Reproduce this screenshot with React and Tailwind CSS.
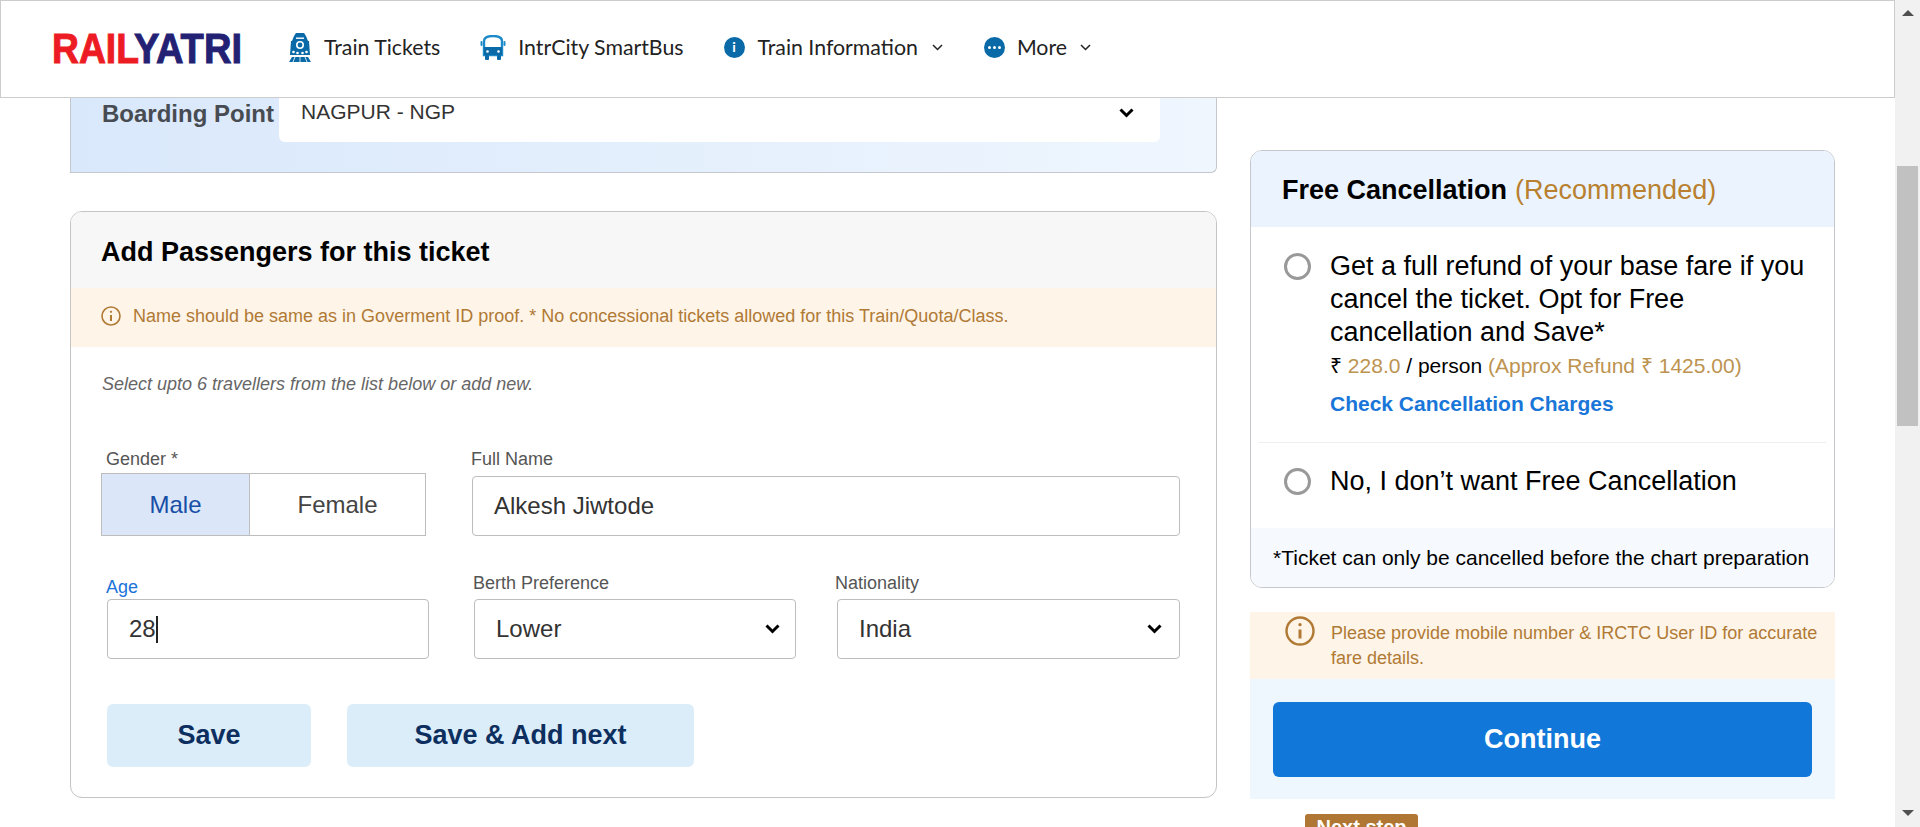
import React from 'react';

const sans = "font-['Liberation_Sans',Arial,sans-serif]";
const Fieldbox = 'rounded-[4px] border border-[#bdbdbd] bg-white h-[60px] flex items-center';

const TrainIcon = () => (
  <svg width="22" height="29" viewBox="0 0 22 29" fill="#0a6aa8">
    <path d="M7 0h8l2 3H5z" />
    <path d="M5 3h12l2 5H3z" />
    <path d="M2 8h18l1 14H1z" />
    <circle cx="11" cy="12" r="3.2" fill="none" stroke="#fff" strokeWidth="1.6" />
    <rect x="7" y="4.5" width="8" height="1.4" fill="#fff" />
    <circle cx="4.5" cy="19" r="1.3" fill="#fff" />
    <circle cx="8.5" cy="20" r="1.3" fill="#fff" />
    <circle cx="13.5" cy="20" r="1.3" fill="#fff" />
    <circle cx="17.5" cy="19" r="1.3" fill="#fff" />
    <path d="M3 24h16l3 5H0z" />
    <path d="M6 24l-2 5M11 24v5M16 24l2 5" stroke="#fff" strokeWidth="0.8" />
  </svg>
);

const BusIcon = () => (
  <svg width="26" height="25" viewBox="0 0 26 25">
    <path d="M4 6c0-3 3-5 9-5s9 2 9 5v14H4z" fill="#fff" stroke="#1c8ac9" strokeWidth="2.4" />
    <path d="M4 12h18v8H4z" fill="#0a6aa8" />
    <rect x="0.5" y="6" width="2" height="5" rx="1" fill="#1c8ac9" />
    <rect x="23.5" y="6" width="2" height="5" rx="1" fill="#1c8ac9" />
    <rect x="5" y="20" width="4" height="5" rx="1" fill="#0a6aa8" />
    <rect x="17" y="20" width="4" height="5" rx="1" fill="#0a6aa8" />
    <circle cx="7.5" cy="16.5" r="1.3" fill="#fff" />
    <circle cx="18.5" cy="16.5" r="1.3" fill="#fff" />
  </svg>
);

const NavChevron = () => (
  <svg width="11" height="7" viewBox="0 0 11 7" fill="none" stroke="#222" strokeWidth="1.5">
    <path d="M1 1l4.5 4.5L10 1" />
  </svg>
);

const SelectChevron = () => (
  <svg width="15" height="10" viewBox="0 0 15 10" fill="none" stroke="#000" strokeWidth="3">
    <path d="M1.5 1.5l6 6 6-6" />
  </svg>
);

const InfoOutline = ({ size }) => (
  <svg width={size} height={size} viewBox="0 0 20 20" fill="none" stroke="#b07a35" strokeWidth="1.6">
    <circle cx="10" cy="10" r="9" />
    <path d="M10 9v6" strokeWidth="2" />
    <circle cx="10" cy="5.8" r="1.1" fill="#b07a35" stroke="none" />
  </svg>
);

const Radio = () => (
  <div className="w-[27px] h-[27px] rounded-full border-[3px] border-[#999] shrink-0" />
);

const NavItem = ({ icon, label, chevron, className }) => (
  <div className={`flex items-center ${className}`}>
    <span className="shrink-0 flex">{icon}</span>
    <span className="text-[21.3px] text-[#222] leading-none whitespace-nowrap">{label}</span>
    {chevron && <span className="ml-px flex"><NavChevron /></span>}
  </div>
);

const Header = () => (
  <header className="h-[98px] shrink-0 border border-[#ccc] bg-white flex items-center pl-[51px] pb-[3px] font-['Lato',sans-serif]">
    <svg width="191" height="50" viewBox="0 0 191 50" className="shrink-0 overflow-visible">
      <text x="0" y="40" textLength="87" lengthAdjust="spacingAndGlyphs" fontFamily="Liberation Sans" fontWeight="700" fontSize="43" fill="#ed1c24" stroke="#ed1c24" strokeWidth="1">RAIL</text>
      <text x="82" y="40" textLength="108" lengthAdjust="spacingAndGlyphs" fontFamily="Liberation Sans" fontWeight="700" fontSize="43" fill="#232173" stroke="#232173" strokeWidth="1">YATRI</text>
    </svg>
    <NavItem className="ml-[46px] gap-[13px]" icon={<TrainIcon />} label="Train Tickets" />
    <NavItem className="ml-[40px] gap-[12px]" icon={<BusIcon />} label="IntrCity SmartBus" />
    <NavItem
      className="ml-[40px] gap-[13px]"
      icon={
        <span className="w-[21px] h-[21px] rounded-full bg-[#0a6aa8] flex items-center justify-center text-white text-[14px] font-bold leading-none">i</span>
      }
      label="Train Information"
      chevron
    />
    <NavItem
      className="ml-[41px] gap-[12px]"
      icon={
        <span className="w-[21px] h-[21px] rounded-full bg-[#0a6aa8] flex items-center justify-center gap-[2px]">
          <span className="w-[3px] h-[3px] rounded-full bg-white" />
          <span className="w-[3px] h-[3px] rounded-full bg-white" />
          <span className="w-[3px] h-[3px] rounded-full bg-white" />
        </span>
      }
      label="More"
      chevron
    />
  </header>
);

const BoardingCard = () => (
  <div className="h-[75px] rounded-br-[6px] border-b border-r border-l border-[#c4c8cc] bg-gradient-to-r from-[#d9e8fb] to-[#eff6fe] flex items-start pl-[31px] pr-[56px]">
    <div className="w-[177px] text-[24px] leading-[32px] font-bold text-[#474b52] whitespace-nowrap">Boarding Point</div>
    <div className="flex-1 h-[44px] rounded-b-[6px] bg-white flex items-start justify-between pl-[22px] pr-[26px] text-[21px] leading-[28px] text-[#333]">
      <span>NAGPUR - NGP</span>
      <span className="pt-[10px]"><SelectChevron /></span>
    </div>
  </div>
);

const Label = ({ children, className = '' }) => (
  <div className={`text-[18px] leading-[18px] text-[#555] ${className}`}>{children}</div>
);

const PassengerCard = () => (
  <div className="mt-[38px] h-[587px] rounded-[12px] border border-[#c4c4c4] overflow-hidden bg-white">
    <div className="h-[76px] bg-[#f7f7f7] flex items-center pl-[30px] pt-[4px] text-[27px] font-bold text-black">
      Add Passengers for this ticket
    </div>
    <div className="h-[59px] bg-[#fef4e8] flex items-center gap-[12px] pl-[30px] pb-[3px] text-[18px] text-[#b07a35]">
      <InfoOutline size={20} />
      <span>Name should be same as in Goverment ID proof. * No concessional tickets allowed for this Train/Quota/Class.</span>
    </div>
    <div className="pt-[28px] pl-[31px] text-[18px] leading-[18px] italic text-[#666]">
      Select upto 6 travellers from the list below or add new.
    </div>

    <div className="mt-[57px] flex pl-[30px] pr-[36px]">
      <div className="w-[325px] mr-[45px]">
        <Label className="pl-[5px] mb-[5px]">Gender *</Label>
        <div className="h-[63px] border border-[#bdbdbd] flex text-[24px]">
          <div className="w-[148px] bg-[#dbe7f8] text-[#174ea6] border-r border-[#bdbdbd] flex items-center justify-center">Male</div>
          <div className="flex-1 text-[#444] flex items-center justify-center">Female</div>
        </div>
      </div>
      <div className="flex-1 flex flex-col justify-end">
        <Label className="mb-[8px]">Full Name</Label>
        <div className={`${Fieldbox} ml-[1px] pl-[21px] text-[24px] text-[#333]`}>Alkesh Jiwtode</div>
      </div>
    </div>

    <div className="mt-[42px] flex pl-[36px] pr-[36px] gap-[45px]">
      <div className="w-[322px]">
        <Label className="text-[#1a73d9]! -ml-px mb-[3px]">Age</Label>
        <div className={`${Fieldbox} pl-[21px] text-[24px] text-[#333]`}>
          28<span className="w-[2px] h-[27px] bg-[#222]" />
        </div>
      </div>
      <div className="w-[322px] -mt-[4px]">
        <Label className="-ml-[1px] mb-[7px]">Berth Preference</Label>
        <div className={`${Fieldbox} pl-[21px] pr-[15px] justify-between text-[24px] text-[#333]`}>
          Lower <SelectChevron />
        </div>
      </div>
      <div className="flex-1 -mt-[4px] -ml-[4px]">
        <Label className="-ml-[2px] mb-[7px]">Nationality</Label>
        <div className={`${Fieldbox} pl-[21px] pr-[17px] justify-between text-[24px] text-[#333]`}>
          India <SelectChevron />
        </div>
      </div>
    </div>

    <div className="mt-[45px] flex pl-[36px] gap-[36px] text-[27px] font-bold text-[#0c2f5f]">
      <button className="w-[204px] h-[63px] rounded-[6px] bg-[#dcedfa]">Save</button>
      <button className="w-[347px] h-[63px] rounded-[6px] bg-[#dcedfa]">Save &amp; Add next</button>
    </div>
  </div>
);

const CancellationCard = () => (
  <div className="mt-[52px] rounded-[12px] border border-[#c4c8cc] overflow-hidden bg-white">
    <div className="h-[76px] bg-[#ebf4fe] flex items-center pl-[31px] pt-[3px] text-[27px]">
      <span className="font-bold text-black">Free Cancellation</span>
      <span className="ml-[8px] text-[#b8802f]">(Recommended)</span>
    </div>
    <div className="flex gap-[19px] pt-[26px] pl-[33px] pr-[20px]">
      <Radio />
      <div>
        <div className="text-[27px] leading-[33px] text-black -mt-[3px]">
          Get a full refund of your base fare if you cancel the ticket. Opt for Free cancellation and Save*
        </div>
        <div className="mt-[5px] text-[21px] leading-[24px] text-black">
          ₹ <span className="text-[#bd9350]">228.0</span> / person <span className="text-[#bd9350]">(Approx Refund ₹ 1425.00)</span>
        </div>
        <div className="mt-[14px] text-[21px] leading-[24px] font-bold text-[#1976d8]">Check Cancellation Charges</div>
      </div>
    </div>
    <div className="mt-[26px] mx-[8px] h-px bg-[#eee]" />
    <div className="flex items-center gap-[19px] mt-[22px] pl-[33px] text-[27px] leading-[33px] text-black">
      <Radio />
      <span>No, I don’t want Free Cancellation</span>
    </div>
    <div className="mt-[30px] h-[59px] bg-[#f6faff] flex items-center pl-[22px] text-[21px] text-black">
      *Ticket can only be cancelled before the chart preparation
    </div>
  </div>
);

const ContinuePanel = () => (
  <div className="mt-[24px]">
    <div className="h-[67px] bg-[#fef4e8] flex pl-[35px] pt-[4px] gap-[16px] text-[18px] leading-[25px] text-[#b07a35]">
      <span className="shrink-0"><InfoOutline size={30} /></span>
      <div className="pt-[5px]">Please provide mobile number &amp; IRCTC User ID for accurate fare details.</div>
    </div>
    <div className="h-[120px] bg-[#eef7fe] pt-[23px] px-[23px]">
      <button className="w-full h-[75px] rounded-[6px] bg-[#1177d8] text-white text-[27px] font-bold">Continue</button>
    </div>
    <div className="mt-[15px] ml-[55px] w-[113px] h-[40px] rounded-t-[3px] bg-[#b07633] text-white text-[20px] font-bold text-center leading-[26px]">
      Next step
    </div>
  </div>
);

const Scrollbar = () => (
  <div className="w-[25px] shrink-0 bg-[#f1f1f1] flex flex-col items-center justify-between">
    <div className="pt-[10px] h-[166px]">
      <div className="w-0 h-0 border-x-[6px] border-x-transparent border-b-[6px] border-b-[#505050]" />
    </div>
    <div className="w-[21px] h-[260px] bg-[#c1c1c1] shrink-0" />
    <div className="flex-1 flex items-end pb-[11px]">
      <div className="w-0 h-0 border-x-[6px] border-x-transparent border-t-[6px] border-t-[#505050]" />
    </div>
  </div>
);

export default function App() {
  return (
    <div className={`h-[827px] w-[1920px] flex overflow-hidden bg-white ${sans}`}>
      <div className="flex-1 min-w-0 flex flex-col">
        <Header />
        <div className="flex pl-[70px]">
          <div className="w-[1147px] shrink-0">
            <BoardingCard />
            <PassengerCard />
          </div>
          <div className="w-[585px] ml-[33px] shrink-0">
            <CancellationCard />
            <ContinuePanel />
          </div>
        </div>
      </div>
      <Scrollbar />
    </div>
  );
}
